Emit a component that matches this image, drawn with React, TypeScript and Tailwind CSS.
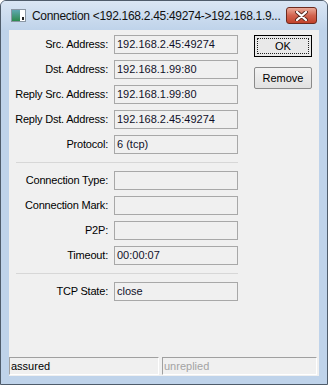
const rows1 = [
  { label: "Src. Address:", value: "192.168.2.45:49274" },
  { label: "Dst. Address:", value: "192.168.1.99:80" },
  { label: "Reply Src. Address:", value: "192.168.1.99:80" },
  { label: "Reply Dst. Address:", value: "192.168.2.45:49274" },
  { label: "Protocol:", value: "6 (tcp)" },
];

const rows2 = [
  { label: "Connection Type:", value: "" },
  { label: "Connection Mark:", value: "" },
  { label: "P2P:", value: "" },
  { label: "Timeout:", value: "00:00:07" },
];

const rows3 = [{ label: "TCP State:", value: "close" }];

function Field({ label, value }: { label: string; value: string }) {
  return (
    <>
      <div className="h-[19px] flex items-center justify-end whitespace-nowrap tracking-[-0.2px]">
        {label}
      </div>
      <div className="h-[19px] border border-[#a8a8a8] bg-[#f0f0f0] pl-[2px] flex items-center text-[#10102a] whitespace-nowrap">
        {value}
      </div>
    </>
  );
}

function Separator() {
  return <div className="col-span-2 ml-[7px] h-px bg-[#d7d7d7] my-[2px]" />;
}

function WindowIcon() {
  return (
    <svg width="15" height="13" viewBox="0 0 15 13">
      <rect x="0.5" y="0.5" width="14" height="12" fill="#fff" stroke="#8a96a3" />
      <defs>
        <linearGradient id="g" x1="0" y1="0" x2="0" y2="1">
          <stop offset="0" stopColor="#5fa8b0" />
          <stop offset="1" stopColor="#2d8a4e" />
        </linearGradient>
      </defs>
      <rect x="1" y="1" width="8" height="11" fill="url(#g)" />
      <rect x="11" y="8" width="2" height="3" fill="#222" />
    </svg>
  );
}

function CloseButton() {
  return (
    <div className="w-[31px] h-[17px] rounded-[3px] border border-[#6d2a1e] bg-gradient-to-b from-[#e9a998] via-[#d2644f] to-[#c2412a] flex items-center justify-center">
      <svg width="13" height="10" viewBox="0 0 13 10">
        <path
          d="M2 1 L11 9 M11 1 L2 9"
          stroke="#5a2a22"
          strokeWidth="4"
          strokeLinecap="round"
        />
        <path
          d="M2 1 L11 9 M11 1 L2 9"
          stroke="#fff"
          strokeWidth="2.2"
          strokeLinecap="round"
        />
      </svg>
    </div>
  );
}

export default function App() {
  return (
    <div
      className="w-[328px] h-[385px] flex flex-col border border-[#4f5c6b] rounded-t-[6px] bg-[#bfd3ea] overflow-hidden text-[11px] text-black"
      style={{ fontFamily: '"Liberation Sans", Arial, sans-serif' }}
    >
      <div className="h-[29px] flex items-center bg-gradient-to-b from-[#dae6f4] to-[#bfd3ea] pl-[10px] pr-[10px]">
        <WindowIcon />
        <div className="ml-[6px] flex-1 text-[12px] tracking-[-0.3px] whitespace-nowrap text-[#111]">
          Connection &lt;192.168.2.45:49274-&gt;192.168.1.9...
        </div>
        <CloseButton />
      </div>
      <div className="mx-[8px] flex-1 bg-[#f0f0f0] flex flex-col">
        <div className="flex-1 flex pt-[5px]">
          <div className="w-[229px] grid grid-cols-[99px_124px] gap-x-[6px] gap-y-[6px] content-start">
            {rows1.map((r) => (
              <Field key={r.label} {...r} />
            ))}
            <Separator />
            {rows2.map((r) => (
              <Field key={r.label} {...r} />
            ))}
            <Separator />
            {rows3.map((r) => (
              <Field key={r.label} {...r} />
            ))}
          </div>
          <div className="ml-[16px] w-[58px] flex flex-col gap-[10px]">
            <div className="h-[22px] border border-black bg-[#e9e9e9] p-[2px]">
              <div className="h-full border border-dotted border-[#222] flex items-center justify-center">
                OK
              </div>
            </div>
            <div className="h-[22px] border border-[#8a8a8a] rounded-[2px] bg-gradient-to-b from-[#f3f3f3] to-[#e1e1e1] flex items-center justify-center">
              Remove
            </div>
          </div>
        </div>
        <div className="h-[18px] flex gap-[3px] mr-[2px] mb-px">
          <div className="w-[150px] border-t border-l border-[#a0a0a0] border-b border-r border-b-white border-r-white flex items-center pl-[1px]">
            assured
          </div>
          <div className="flex-1 border-t border-l border-[#a0a0a0] border-b border-r border-b-white border-r-white flex items-center pl-[1px] text-[#a3a3a3]">
            unreplied
          </div>
        </div>
      </div>
      <div className="h-[8px]" />
    </div>
  );
}
